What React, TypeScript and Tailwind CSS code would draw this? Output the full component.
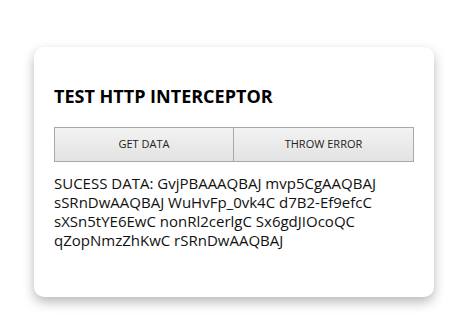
export default function App() {
  return (
    <div className="min-h-screen w-full bg-white pt-[47px] pl-[34px]" style={{ fontFamily: '"Open Sans", "Noto Sans", sans-serif' }}>
      <div className="w-[400px] h-[250px] bg-white rounded-[10px] px-5 shadow-[0_5px_12px_rgba(0,0,0,0.28)]">
        <h2 className="pt-[37px] text-[18px] leading-[24px] font-bold text-black">TEST HTTP INTERCEPTOR</h2>
        <div className="mt-[19px] flex">
          <button className="w-[180px] h-[35px] border border-[#a9a9a9] bg-gradient-to-b from-[#f3f3f3] to-[#e2e2e2] text-[11px] text-[#222]">
            GET DATA
          </button>
          <button className="w-[180px] h-[35px] border border-l-0 border-[#a9a9a9] bg-gradient-to-b from-[#f3f3f3] to-[#e2e2e2] text-[11px] text-[#222]">
            THROW ERROR
          </button>
        </div>
        <p className="mt-[12px] text-[15px] leading-[19px] text-[#111]">
          SUCESS DATA: GvjPBAAAQBAJ mvp5CgAAQBAJ sSRnDwAAQBAJ WuHvFp_0vk4C d7B2-Ef9efcC sXSn5tYE6EwC nonRl2cerlgC Sx6gdJIOcoQC qZopNmzZhKwC rSRnDwAAQBAJ
        </p>
      </div>
    </div>
  );
}
